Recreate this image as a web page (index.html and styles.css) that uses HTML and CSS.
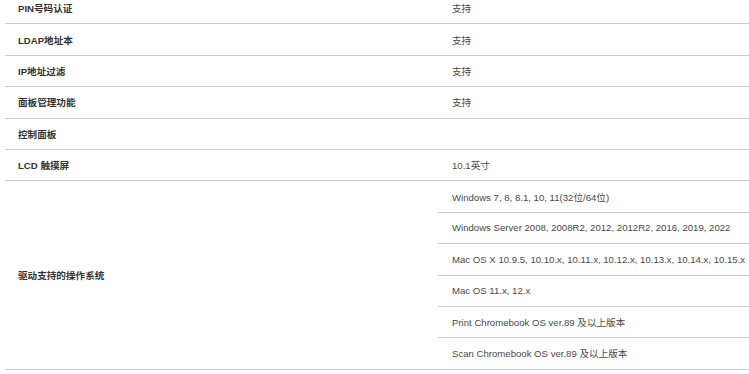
FILE: index.html
```html
<!DOCTYPE html>
<html lang="zh-CN">
<head>
<meta charset="utf-8">
<title>规格</title>
<link rel="stylesheet" href="styles.css">
</head>
<body>
<div class="spec">
  <div class="label">PIN号码认证</div><div class="value">支持</div>
  <div class="label">LDAP地址本</div><div class="value">支持</div>
  <div class="label">IP地址过滤</div><div class="value">支持</div>
  <div class="label">面板管理功能</div><div class="value">支持</div>
  <div class="label">控制面板</div><div class="value"></div>
  <div class="label">LCD 触摸屏</div><div class="value">10.1英寸</div>
  <div class="label group">驱动支持的操作系统</div>
  <div class="value">Windows 7, 8, 8.1, 10, 11(32位/64位)</div>
  <div class="value">Windows Server 2008, 2008R2, 2012, 2012R2, 2016, 2019, 2022</div>
  <div class="value">Mac OS X 10.9.5, 10.10.x, 10.11.x, 10.12.x, 10.13.x, 10.14.x, 10.15.x</div>
  <div class="value">Mac OS 11.x, 12.x</div>
  <div class="value">Print Chromebook OS ver.89 及以上版本</div>
  <div class="value">Scan Chromebook OS ver.89 及以上版本</div>
</div>
</body>
</html>
```
FILE: styles.css
```css
html, body {
  margin: 0;
  padding: 0;
  background: #ffffff;
}
body {
  font-family: "Liberation Sans", "Noto Sans CJK SC", sans-serif;
  font-size: 9.6px;
  overflow: hidden;
}
.spec {
  display: grid;
  grid-template-columns: 433px 340px;
  grid-auto-rows: 31.4px;
  margin: -7px 0 0 5px;
}
.label, .value {
  box-sizing: border-box;
  border-bottom: 1px solid #cdcdcd;
  display: flex;
  align-items: center;
  white-space: nowrap;
}
.label {
  padding-left: 13px;
  font-weight: bold;
  color: #333333;
}
.value {
  padding-left: 14px;
  color: #4a4a4a;
}
.group {
  grid-row: span 6;
}
```
